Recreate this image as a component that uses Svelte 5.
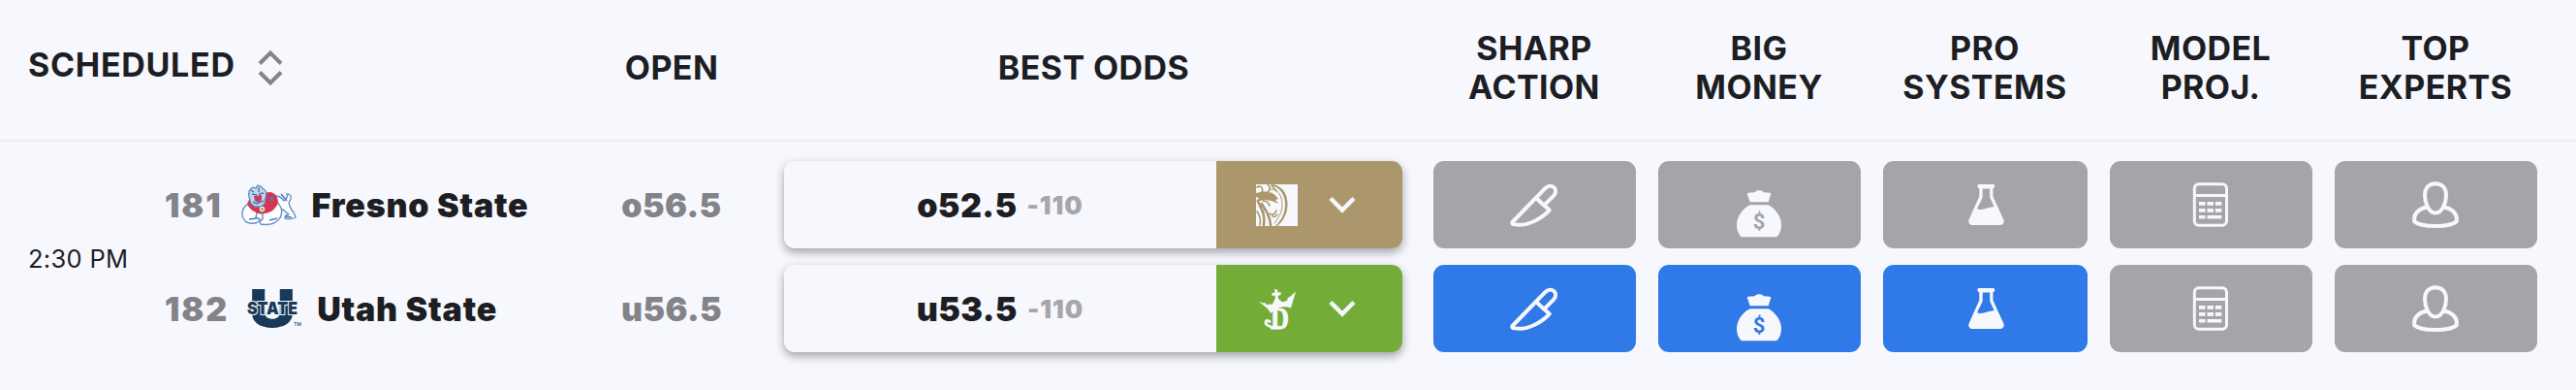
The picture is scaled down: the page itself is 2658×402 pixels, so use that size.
<script>
	const signals = [
		{ label: ['SHARP', 'ACTION'], icon: 'knife' },
		{ label: ['BIG', 'MONEY'], icon: 'bag' },
		{ label: ['PRO', 'SYSTEMS'], icon: 'flask' },
		{ label: ['MODEL', 'PROJ.'], icon: 'calculator' },
		{ label: ['TOP', 'EXPERTS'], icon: 'person' },
	]

	const time = '2:30 PM'

	const teams = [
		{
			rotation: 181,
			name: 'Fresno State',
			logo: 'fresno',
			open: 'o56.5',
			best: 'o52.5',
			juice: '-110',
			book: 'mgm',
			active: [],
		},
		{
			rotation: 182,
			name: 'Utah State',
			logo: 'utah',
			open: 'u56.5',
			best: 'u53.5',
			juice: '-110',
			book: 'draftkings',
			active: ['knife', 'bag', 'flask'],
		},
	]
</script>

<main>
	<header class="grid head">
		<div class="scheduled">
			<span>SCHEDULED</span>
			<svg class="sort" viewBox="0 0 26 38" aria-hidden="true">
				<path d="M2 14.5 13 3.5l11 11M2 23.5l11 11 11-11" />
			</svg>
		</div>
		<div>OPEN</div>
		<div>BEST ODDS</div>
		{#each signals as { label }}
			<div>{label[0]}<br />{label[1]}</div>
		{/each}
	</header>

	<section class="game">
		<div class="time">{time}</div>
		<div class="teams">
			{#each teams as team}
				<div class="grid row">
					<div class="team">
						<span class="rotation">{team.rotation}</span>
						{#if team.logo === 'fresno'}
							<svg class="logo fresno" viewBox="0 0 57 42" aria-hidden="true">
								<g fill="#fff" stroke="#6792c4" stroke-width="1.4" stroke-linejoin="round">
									<path d="M35 12c4 0 7 2 9 5 3-2 4-4 3-7 3 0 5 2 4 5l-2 4c1 4 3 8 5 10l2 5c-3 2-7 2-11 1l1-3 3-1-6-5-8 2z" />
									<path d="M6 21C1 24 0 30 2 35c2 4 6 6 11 5 3 0 5-1 6-4l-4-2 1-5 6 1v6c-3 1-3 4-2 5 6 1 11 1 15-2 5-3 8-8 6-15l-5-8z" />
								</g>
								<path d="M6 20c2-5 5-8 8-10l16-2c5 1 8 5 8 11-2 6-7 10-14 11-8 1-15-3-18-10z" fill="#d83352" />
								<path d="M8 13C7 8 8 5 12 3l3 1 2-3 3 1 3 3c3 1 3 5 2 9l-1 6-4 3h-6l-4-3z" fill="#c3d6ea" stroke="#5c8abc" stroke-width="1.3" />
								<path d="m13 12 8-1v5l-3 3-4-2z" fill="#c53b62" />
								<path d="m11 10 5 1M18 10l5-1M12 18l4 2 7-3M18 3v5M10 6l3 2" fill="none" stroke="#477ab3" stroke-width="1.4" />
								<path d="m29 13 4 4M30 17l3-5M41 10l6 7M8 36l8-1M29 37l8-2M45 33l7 1" fill="none" stroke="#4a7eb8" stroke-width="1.6" />
								<circle cx="21.5" cy="25.5" r="2.7" fill="#f4f4dc" />
								<circle cx="21.5" cy="25.5" r="1.3" fill="#5f9c68" />
							</svg>
						{:else}
							<svg class="logo utah" viewBox="0 0 56 40" aria-hidden="true">
								<text class="u" x="2" y="38.8" textLength="48" lengthAdjust="spacingAndGlyphs">U</text>
								<text class="state" x="0" y="26" textLength="52" lengthAdjust="spacingAndGlyphs">STATE</text>
								<text class="tm" x="48" y="38">TM</text>
							</svg>
						{/if}
						<span class="name">{team.name}</span>
					</div>
					<div class="open">{team.open}</div>
					<div class="odds">
						<div class="line">
							<span>{team.best}</span>
							<span class="juice">{team.juice}</span>
						</div>
						<div class="book {team.book}">
							{#if team.book === 'mgm'}
								<svg width="43" height="43" viewBox="0 0 43 43" aria-hidden="true">
									<path d="M0 0h43v43H0z" fill="#f7f8fe" />
									<path d="M17 0c12 2 16 12 15.5 22C32 31 28 38 22 43h-2c6-6 10-13 10-22C30 11 25 3 15 1z" fill="#ab976b" />
									<path d="M0 9c5-1 8-2 12-1 5 0 8 3 11 7l-3 1 3 4-7-3-8-1-8 2 3-4-3-1z" fill="#ab976b" />
									<g fill="none" stroke="#ab976b" stroke-width="1.6" stroke-linecap="round">
										<path d="M14 5c8-1 13 6 13 16 0 8-4 14-8 19" stroke-width="1" />
										<path d="M1 3c4-3 8 2 4 6M12 0c3 3 3 6 0 8M16 1l5 6" />
										<path d="M2 17c2 7 8 12 6 25M6 20c2 5 8 9 9 22" stroke-width="2.6" />
										<path d="M1 28c3 4 4 9 3 14M7 17c4 0 6 2 7 5M14 30c3 3 6 0 7-3M17 33c2 1 4 0 5-2" />
									</g>
								</svg>
							{:else}
								<svg width="43" height="43" viewBox="0 0 43 43" aria-hidden="true">
									<path d="m3 14 5 1.5 2-.5v2l7-.5 3-6.500-.5-2.500-3 .5v-3l3-.5L19 1l3 .5.5 3 3-.5v3l-3 1 1 3.500 4 3 5-2V10l3-1.500 5.500-5L36 20.500c-7-3-15-.500-21 5.500-2-5-7-8-12-12z" fill="#f7f8fe" />
									<text class="d" x="15" y="41.5" textLength="19" lengthAdjust="spacingAndGlyphs">D</text>
									<path d="M14 34.500c-3-3-6 1-2.500 3.500 4 3 9 3 13 2" fill="none" stroke="#f7f8fe" stroke-width="2.8" stroke-linecap="round" />
								</svg>
							{/if}
							<svg class="chevron" width="28" height="18" viewBox="0 0 28 18" aria-hidden="true">
								<path d="M2 2.5 14 14.500l12-12" />
							</svg>
						</div>
					</div>
					{#each signals as { icon }}
						<div class="cell">
							<div class="signal" class:active={team.active.includes(icon)}>
								<svg viewBox="0 0 54 54" aria-hidden="true">
									{#if icon === 'knife'}
										<path class="stroke" d="M4.500 45 38.800 9.700c6-5.500 13.700 1.400 8.700 7.600L37.200 27.600l5.600 5C36 40 21 50 7 47.400c-2.400-.4-3.300-1.300-2.500-2.400zM29.500 20.500l8 7.500" />
									{:else if icon === 'bag'}
										<path d="M14.700 15.500c2-1.700 6-.3 8-1.500 2.300-2.300 6.700-2.300 9 0 2 1.200 6-.2 7.700 1.500l-2.700 8.800h-19z" />
										<path d="M17.700 27.300h18.800C44 31 50 39.500 50 47.500c0 5-1.500 10-5 12.800H9C5.500 57.500 4 52.500 4 47.500c0-8 6-16.500 13.700-20.200z" />
										<text class="dollar" x="27" y="51.5">$</text>
									{:else if icon === 'flask'}
										<path
											fill-rule="evenodd"
											d="M20.500 6h15.600c1.600 0 1.600 4.300-.7 4.300v8.200L46.200 42c1.500 3.500-.5 6-3.700 6h-28c-3.200 0-5.200-2.500-3.700-6l10.500-23.500v-8.200c-2.300 0-2.300-4.300-.8-4.300zM24.700 10.500v9L19 31.300c6 2.200 11-1.800 17.600-2.300l-4.400-9.500v-9z"
										/>
									{:else if icon === 'calculator'}
										<rect class="stroke thin" x="10.3" y="5.8" width="33.2" height="42.4" rx="4.5" />
										<path d="M10 16h34v3H10z" />
										<path d="M15 24h6.500v3.700H15zm8.500 0H30v3.700h-6.500zm8.300 0h6.500v3.700h-6.500zM15 31h6.500v3.700H15zm8.500 0H30v3.700h-6.500zm8.300 0h6.500v3.700h-6.500zM15 38h6.500v3.500H15zm8.500 0h14.800v3.500H23.500z" />
									{:else}
										<path class="stroke" d="M27 5.200c7 0 11 5 11 12 0 8-4 18.300-11 18.300s-11-10.300-11-18.300c0-7 4-12 11-12z" />
										<path class="stroke" d="M18 29.500C10 31 5.200 36 5.200 41v3.300C8 47 16 49 27 49s19-2 21.800-4.700V41c0-5-4.800-10-12.800-11.500" />
									{/if}
								</svg>
							</div>
						</div>
					{/each}
				</div>
			{/each}
		</div>
	</section>
</main>

<style>
	:global(body) {
		background: #f7f8fe;
	}

	main {
		width: 2658px;
		height: 402px;
		overflow: hidden;
		background: #f7f8fe;
		color: #1d1e23;
		font-family: Inter, 'Liberation Sans', sans-serif;
		font-size: 34px;
		font-weight: 700;
		letter-spacing: 0.4px;
	}

	svg {
		flex: none;
		overflow: visible;
	}

	.grid {
		display: grid;
		grid-template-columns: 596px 194px 677px 232px 232px 234px 232px 232px;
		align-items: center;
	}

	.head {
		box-sizing: border-box;
		height: 146px;
		padding-bottom: 5px;
		border-bottom: 2px solid #ebecf1;
		line-height: 40px;
		text-align: center;
	}

	.scheduled {
		display: flex;
		align-items: center;
		gap: 23px;
		padding: 0 0 5px 29px;
		letter-spacing: 0.7px;
	}

	.sort {
		width: 26px;
		height: 38px;
		margin-top: 5px;
		fill: none;
		stroke: #848388;
		stroke-width: 4;
	}

	.game {
		display: grid;
		padding-top: 20px;
	}

	.game > * {
		grid-area: 1 / 1;
	}

	.time {
		align-self: center;
		padding: 4px 0 0 29px;
		font-size: 25.5px;
		font-weight: 400;
		letter-spacing: 0.3px;
	}

	.teams {
		display: grid;
		gap: 17px;
	}

	.row {
		height: 90px;
		font-weight: 900;
		letter-spacing: 0.4px;
	}

	.team {
		display: flex;
		align-items: center;
		padding-left: 170px;
	}

	.rotation,
	.open {
		color: #848388;
	}

	.rotation {
		letter-spacing: 1.9px;
	}

	.name {
		letter-spacing: 0.8px;
	}

	.open {
		text-align: center;
	}

	.logo {
		margin: 0 16px 0 19px;
	}

	.fresno {
		width: 57px;
		height: 42px;
	}

	.utah {
		width: 56px;
		height: 40px;
	}

	.utah text {
		fill: #183a5a;
		letter-spacing: 0;
	}

	.u {
		font-size: 54px;
		font-weight: 900;
	}

	.state {
		font-size: 18px;
		font-weight: 900;
		paint-order: stroke;
		stroke: #f7f8fe;
		stroke-width: 2px;
	}

	.tm {
		font-size: 5px;
		font-weight: 500;
	}

	.odds {
		display: flex;
		height: 90px;
		margin: 0 20px 0 19px;
		border-radius: 11px;
		box-shadow: 0 4px 10px rgb(29 30 35 / 0.4);
		background: #f7f8fe;
		overflow: hidden;
	}

	.line {
		flex: 1;
		display: flex;
		align-items: center;
		justify-content: center;
		gap: 10px;
	}

	.juice {
		color: #a7a6ab;
		font-size: 26px;
		letter-spacing: 1px;
	}

	.book {
		display: flex;
		align-items: center;
		gap: 32px;
		width: 151px;
		padding-left: 41px;
	}

	.mgm {
		background: #ab976b;
	}

	.draftkings {
		background: #73ad37;
	}

	.d {
		fill: #f7f8fe;
		stroke: #f7f8fe;
		stroke-width: 0.8px;
		font-family: 'Liberation Serif', serif;
		font-size: 32px;
		font-weight: 700;
		letter-spacing: 0;
	}

	.chevron {
		fill: none;
		stroke: #f7f8fe;
		stroke-width: 4.5;
	}

	.cell {
		padding: 0 11px 0 12px;
	}

	.signal {
		display: flex;
		align-items: center;
		justify-content: center;
		height: 90px;
		border-radius: 11px;
		background: #a5a4a9;
		color: #a5a4a9;
	}

	.active {
		background: #2f7ae8;
		color: #2f7ae8;
	}

	.signal svg {
		width: 54px;
		height: 54px;
		margin-right: 1px;
		fill: #f7f8fe;
	}

	.signal .stroke {
		fill: none;
		stroke: #f7f8fe;
		stroke-width: 4;
		stroke-linejoin: round;
	}

	.signal .thin {
		stroke-width: 3;
	}

	.dollar {
		fill: currentColor;
		font-family: Roboto, sans-serif;
		font-size: 22px;
		font-weight: 700;
		letter-spacing: 0;
		text-anchor: middle;
	}
</style>
